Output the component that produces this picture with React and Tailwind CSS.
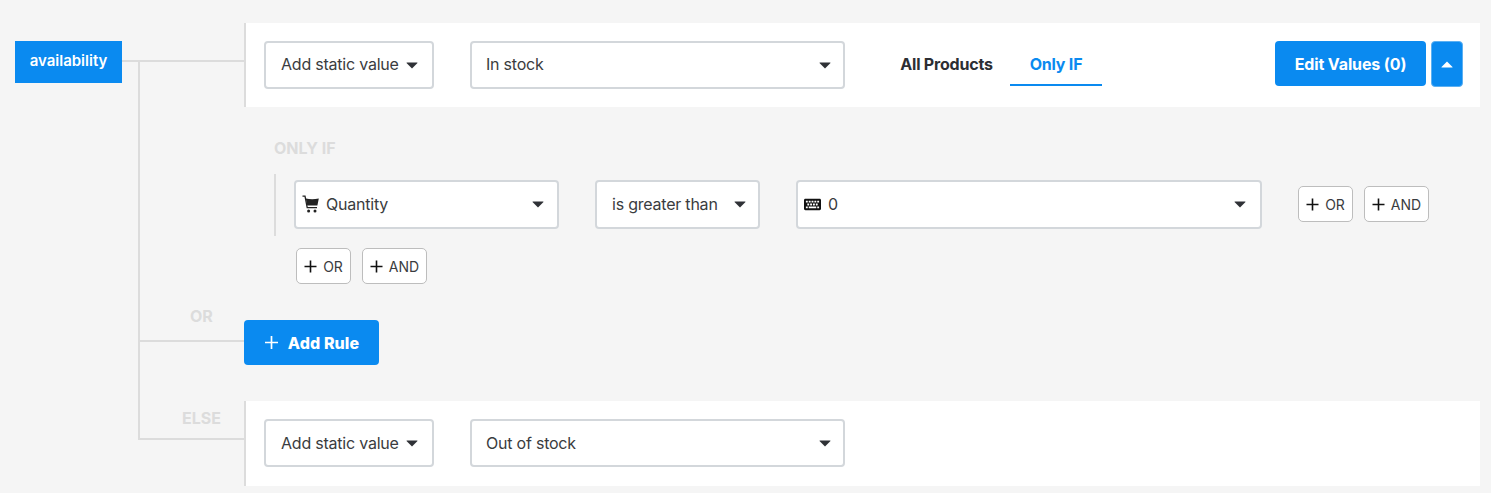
import React from "react";
import { FaKeyboard } from "react-icons/fa";

const F = "font-['Inter','Liberation_Sans',sans-serif]";

function Caret({ up = false, className = "" }) {
  return (
    <svg width="12" height="7" viewBox="0 0 12 7" className={className}>
      <path
        d={up ? "M6 0.5 L11.5 6 Q11.8 6.6 11 6.6 L1 6.6 Q0.2 6.6 0.5 6 Z" : "M1 0.4 L11 0.4 Q11.8 0.4 11.5 1 L6 6.6 L0.5 1 Q0.2 0.4 1 0.4 Z"}
        fill="currentColor"
      />
    </svg>
  );
}

function CartIcon() {
  return (
    <svg width="17" height="18" viewBox="0 0 17 18" className="text-[#222]">
      <path d="M0.5 1.2H3L5.2 12.6H15" fill="none" stroke="currentColor" strokeWidth="1.3" />
      <path d="M3.8 3.6Q10 5 16.8 3.6L15.4 10.4H5.2Z" fill="currentColor" />
      <circle cx="6.6" cy="16" r="1.5" fill="currentColor" />
      <circle cx="13" cy="16" r="1.5" fill="currentColor" />
    </svg>
  );
}

function Select({ width, icon, label, padLeft = "pl-[15px]", padRight = "pr-[13px]", height = "h-[49px]", textPad = "pb-[1px]" }) {
  return (
    <div className={`${width} ${padLeft} ${padRight} ${height} shrink-0 bg-white border-2 border-[#d3d7db] rounded-[4px] flex items-center justify-between text-[#3a3c40] text-[16px] tracking-[-0.22px]`}>
      <span className={`flex items-center gap-[7px] ${textPad}`}>
        {icon}
        {label}
      </span>
      <Caret className="text-[#2f3136]" />
    </div>
  );
}

function Small({ label, width }) {
  return (
    <div className={`${width} h-[36px] shrink-0 border border-[#bdbdbd] rounded-[5px] bg-white flex items-center justify-center gap-[6px] text-[14px] text-[#3a3c40]`}>
      <svg width="13" height="13" viewBox="0 0 13 13" className="text-[#111]">
        <path d="M6.5 0.5V12.5M0.5 6.5H12.5" stroke="currentColor" strokeWidth="1.6" />
      </svg>
      {label}
    </div>
  );
}

function ValueRow({ value, textPad }) {
  return (
    <div className="flex items-center gap-[36px]">
      <Select width="w-[170px]" height="h-[48px]" padRight="pr-[14px]" textPad={textPad} label="Add static value" />
      <Select width="w-[375px]" height="h-[48px]" padLeft="pl-[14px]" padRight="pr-[12px]" textPad={textPad} label={value} />
    </div>
  );
}

export default function App() {
  return (
    <div className={`${F} relative w-full h-[493px] bg-[#f5f5f5] flex overflow-hidden`}>
      {/* tree column */}
      <div className="relative w-[244px] shrink-0">
        <div className="mt-[41px] ml-[15px] w-[107px] h-[42px] pb-[2px] bg-[#0a8af0] text-white text-[15px] font-semibold flex items-center justify-center">
          availability
        </div>
        <div className="absolute left-[122px] top-[60px] w-[122px] h-[2px] bg-[#dcdcdc]" />
        <div className="absolute left-[138px] top-[61px] w-[2px] h-[378px] bg-[#dcdcdc]" />
        <div className="absolute left-[138px] top-[340px] w-[106px] h-[2px] bg-[#dcdcdc]" />
        <div className="absolute left-[138px] top-[438px] w-[106px] h-[2px] bg-[#dcdcdc]" />
        <div className="absolute left-[190px] top-[307px] text-[16px] leading-[18px] font-bold text-[#dcdcdc]">OR</div>
        <div className="absolute left-[182px] top-[409px] text-[16px] leading-[18px] font-bold text-[#dcdcdc]">ELSE</div>
      </div>

      {/* main column */}
      <div className="w-[1236px] pt-[23px] flex flex-col">
        <div className="h-[84px] shrink-0 bg-white border-l-2 border-[#dcdcdc] pl-[18px] pr-[17px] flex items-center">
          <ValueRow value="In stock" textPad="pb-[2px]" />
          <div className="ml-[55px] h-[45px] self-start mt-[18px] flex text-[16px] font-bold tracking-[-0.2px]">
            <div className="w-[93px] pt-[11px] text-center text-[#2c2e33] whitespace-nowrap">All Products</div>
            <div className="ml-[17px] w-[92px] pt-[11px] text-center text-[#0a8af0] border-b-2 border-[#0a8af0]">Only IF</div>
          </div>
          <div className="ml-auto self-start mt-[18px] flex gap-[5px]">
            <div className="w-[151px] h-[45px] bg-[#0a8af0] rounded-[4px] text-white text-[16px] font-bold tracking-[-0.12px] flex items-center justify-center">
              Edit Values (0)
            </div>
            <div className="w-[32px] h-[46px] bg-[#0a8af0] border border-[#5cb0f2] rounded-[4px] text-white flex items-center justify-center">
              <Caret up />
            </div>
          </div>
        </div>

        <div className="pl-[30px] pt-[32px] h-[213px] shrink-0">
          <div className="text-[16px] leading-[18px] font-bold text-[#dcdcdc]">ONLY IF</div>
          <div className="mt-[17px] h-[62px] border-l-2 border-[#dcdcdc] pl-[18px] pt-[6px] flex items-start">
            <Select width="w-[265px]" padLeft="pl-[6px]" label="Quantity" icon={<CartIcon />} />
            <div className="ml-[36px]">
              <Select width="w-[165px]" padRight="pr-[12px]" label="is greater than" />
            </div>
            <div className="ml-[36px]">
              <Select
                width="w-[466px]"
                padLeft="pl-[6px]"
                padRight="pr-[14px]"
                label="0"
                icon={<FaKeyboard className="text-[#111] text-[17px]" />}
              />
            </div>
            <div className="ml-[36px] mt-[6px] flex gap-[11px]">
              <Small label="OR" width="w-[55px]" />
              <Small label="AND" width="w-[65px]" />
            </div>
          </div>
          <div className="ml-[22px] mt-[12px] flex gap-[11px]">
            <Small label="OR" width="w-[55px]" />
            <Small label="AND" width="w-[65px]" />
          </div>
        </div>

        <div className="w-[135px] h-[45px] shrink-0 bg-[#0a8af0] rounded-[4px] text-white text-[16px] font-extrabold tracking-[0.1px] flex items-center justify-center gap-[9px]">
          <svg width="15" height="15" viewBox="0 0 15 15">
            <path d="M7.5 1V14M1 7.5H14" stroke="currentColor" strokeWidth="1.7" />
          </svg>
          Add Rule
        </div>

        <div className="mt-[36px] h-[85px] shrink-0 bg-white border-l-2 border-[#dcdcdc] pl-[18px] pb-[1px] flex items-center">
          <ValueRow value="Out of stock" textPad="" />
        </div>
      </div>
    </div>
  );
}
